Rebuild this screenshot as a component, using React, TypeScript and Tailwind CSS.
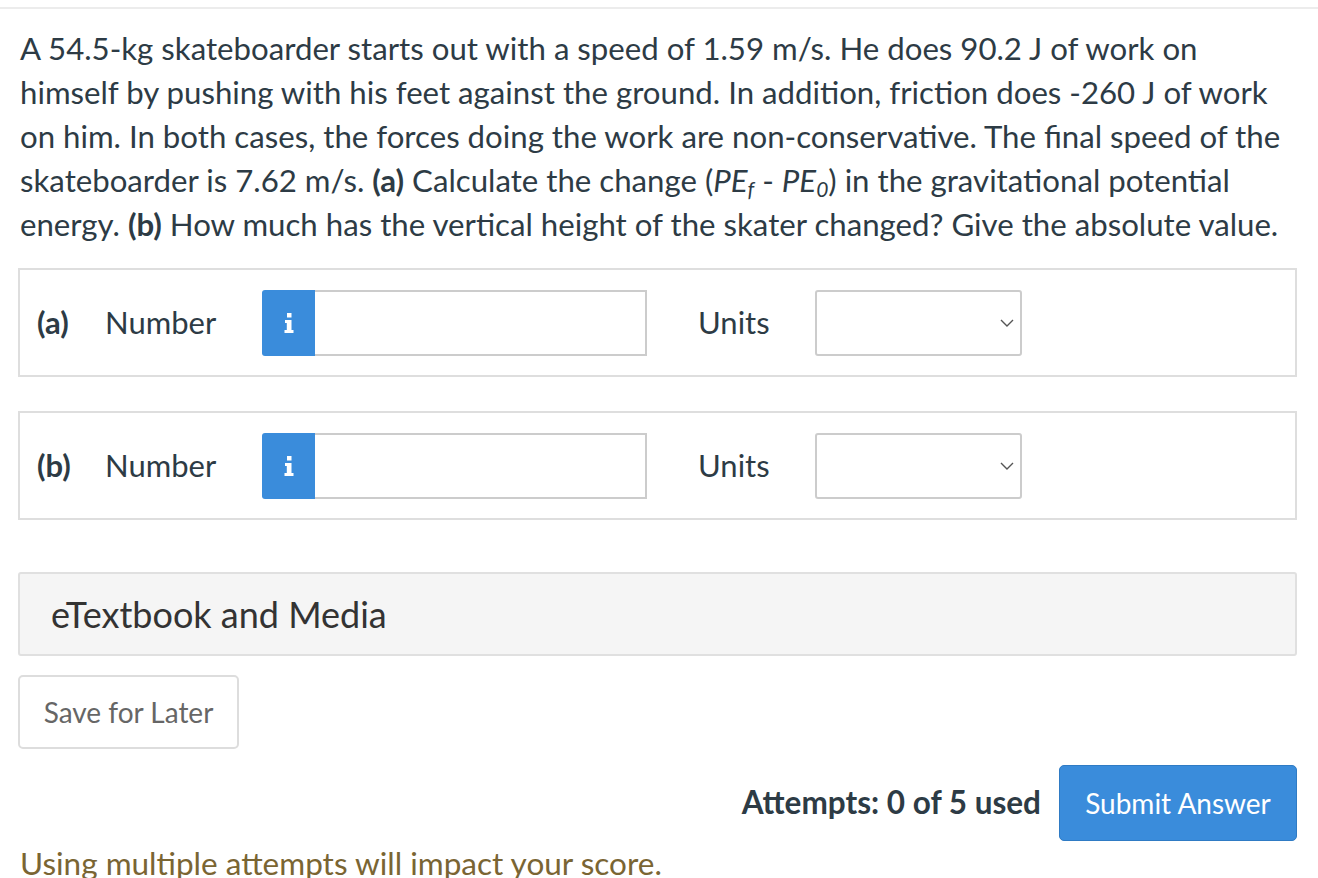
import React from "react";

const font = { fontFamily: "Lato, 'Noto Sans', sans-serif" };

function InfoIcon() {
  return (
    <svg width="10" height="20" viewBox="0 0 10 20" fill="white">
      <rect x="3" y="0" width="4.5" height="4.5" />
      <path d="M1 7h6.5v10H9.5v3H0.5v-3H2.8v-7H1z" />
    </svg>
  );
}

function AnswerRow({ label }: { label: string }) {
  return (
    <div className="ml-[18px] mr-[21px] flex h-[109px] items-center border-2 border-[#dedede] bg-white pl-[17px]">
      <span className="w-[68px] text-[31px] font-bold text-[#2d3b45]">{label}</span>
      <span className="w-[157px] text-[31px] text-[#2d3b45]">Number</span>
      <div className="flex h-[66px]">
        <div className="flex w-[53px] items-center justify-center rounded-l-[3px] bg-[#3a8cdb]">
          <InfoIcon />
        </div>
        <div className="w-[332px] border-2 border-l-0 border-[#cccccc] bg-white" />
      </div>
      <span className="ml-[51px] w-[117px] text-[31px] text-[#2d3b45]">Units</span>
      <div className="flex h-[66px] w-[207px] items-center justify-end rounded-[3px] border-2 border-[#cccccc] bg-white pr-[6px]">
        <svg width="14" height="10" viewBox="0 0 14 10" fill="none" stroke="#555" strokeWidth="1.4">
          <path d="M1 2l6 6 6-6" />
        </svg>
      </div>
    </div>
  );
}

export default function App() {
  return (
    <div className="h-[878px] w-[1318px] overflow-hidden bg-white" style={font}>
      <div className="mt-[7px] h-[2px] bg-[#ececec]" />
      <p className="whitespace-nowrap px-[20px] pt-[17px] text-[31.2px] leading-[44px] text-[#2d3b45]">
        A 54.5-kg skateboarder starts out with a speed of 1.59 m/s. He does 90.2 J of work on
        <br />
        himself by pushing with his feet against the ground. In addition, friction does -260 J of work
        <br />
        on him. In both cases, the forces doing the work are non-conservative. The final speed of the
        <br />
        skateboarder is 7.62 m/s. <b>(a)</b> Calculate the change (
        <i>
          PE<sub className="text-[21px] leading-none">f</sub>
        </i>{" "}
        -{" "}
        <i>
          PE<sub className="text-[21px] leading-none">0</sub>
        </i>
        ) in the gravitational potential
        <br />
        energy. <b>(b)</b> How much has the vertical height of the skater changed? Give the absolute value.
      </p>
      <div className="mt-[22px] flex flex-col gap-[34px]">
        <AnswerRow label="(a)" />
        <AnswerRow label="(b)" />
      </div>
      <div className="ml-[18px] mr-[21px] mt-[52px] flex h-[84px] items-center rounded-[3px] border-2 border-[#e0e0e0] bg-[#f5f5f5] pl-[31px] text-[36px] text-[#333]">
        eTextbook and Media
      </div>
      <button className="mx-[18px] mt-[19px] flex h-[74px] w-[221px] items-center justify-center rounded-[5px] border-2 border-[#dddddd] bg-white text-[28px] text-[#666]">
        Save for Later
      </button>
      <div className="mt-[16px] flex items-center justify-end gap-[18px] pr-[21px]">
        <span className="text-[31.5px] font-bold text-[#2d3b45]">Attempts: 0 of 5 used</span>
        <button className="h-[76px] w-[238px] rounded-[5px] border border-[#2f7bc4] bg-[#3a8cdb] text-[28px] text-white">
          Submit Answer
        </button>
      </div>
      <p className="mt-[2px] px-[20px] text-[31.5px] leading-[40px] text-[#7a6533]">
        Using multiple attempts will impact your score.
      </p>
    </div>
  );
}
